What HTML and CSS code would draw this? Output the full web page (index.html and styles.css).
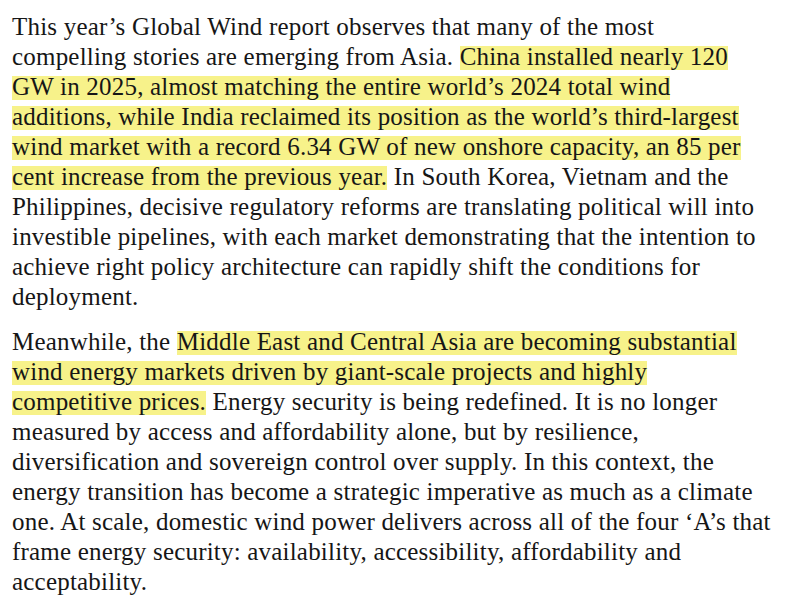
FILE: index.html
```html
<!DOCTYPE html>
<html lang="en">
<head>
<meta charset="utf-8">
<title>Global Wind report</title>
<link rel="stylesheet" href="styles.css">
</head>
<body>
<article class="article">
<p class="para">This year’s Global Wind report observes that many of the most compelling stories are emerging from Asia. <mark class="hl">China installed nearly 120 GW in 2025, almost matching the entire world’s 2024 total wind additions, while India reclaimed its position as the world’s third-largest wind market with a record 6.34 GW of new onshore capacity, an 85 per cent increase from the previous year.</mark> In South Korea, Vietnam and the Philippines, decisive regulatory reforms are translating political will into investible pipelines, with each market demonstrating that the intention to achieve right policy architecture can rapidly shift the conditions for deployment.</p>
<p class="para">Meanwhile, the <mark class="hl">Middle East and Central Asia are becoming substantial wind energy markets driven by giant-scale projects and highly competitive prices.</mark> Energy security is being redefined. It is no longer measured by access and affordability alone, but by resilience, diversification and sovereign control over supply. In this context, the energy transition has become a strategic imperative as much as a climate one. At scale, domestic wind power delivers across all of the four ‘A’s that frame energy security: availability, accessibility, affordability and acceptability.</p>
</article>
</body>
</html>
```

FILE: styles.css
```css
html, body {
  margin: 0;
  padding: 0;
  background: #ffffff;
}

.article {
  padding: 12px 12px;
  width: 759px;
  font-family: "Liberation Serif", "Times New Roman", serif;
  font-size: 25px;
  letter-spacing: 0.2px;
  line-height: 30px;
  color: #161616;
}

.para {
  margin: 0 0 15px 0;
}

.hl {
  color: inherit;
  background: linear-gradient(to bottom, transparent 0, transparent 3.3px, #f7f28a 3.3px, #f7f28a 100%);
}
```
